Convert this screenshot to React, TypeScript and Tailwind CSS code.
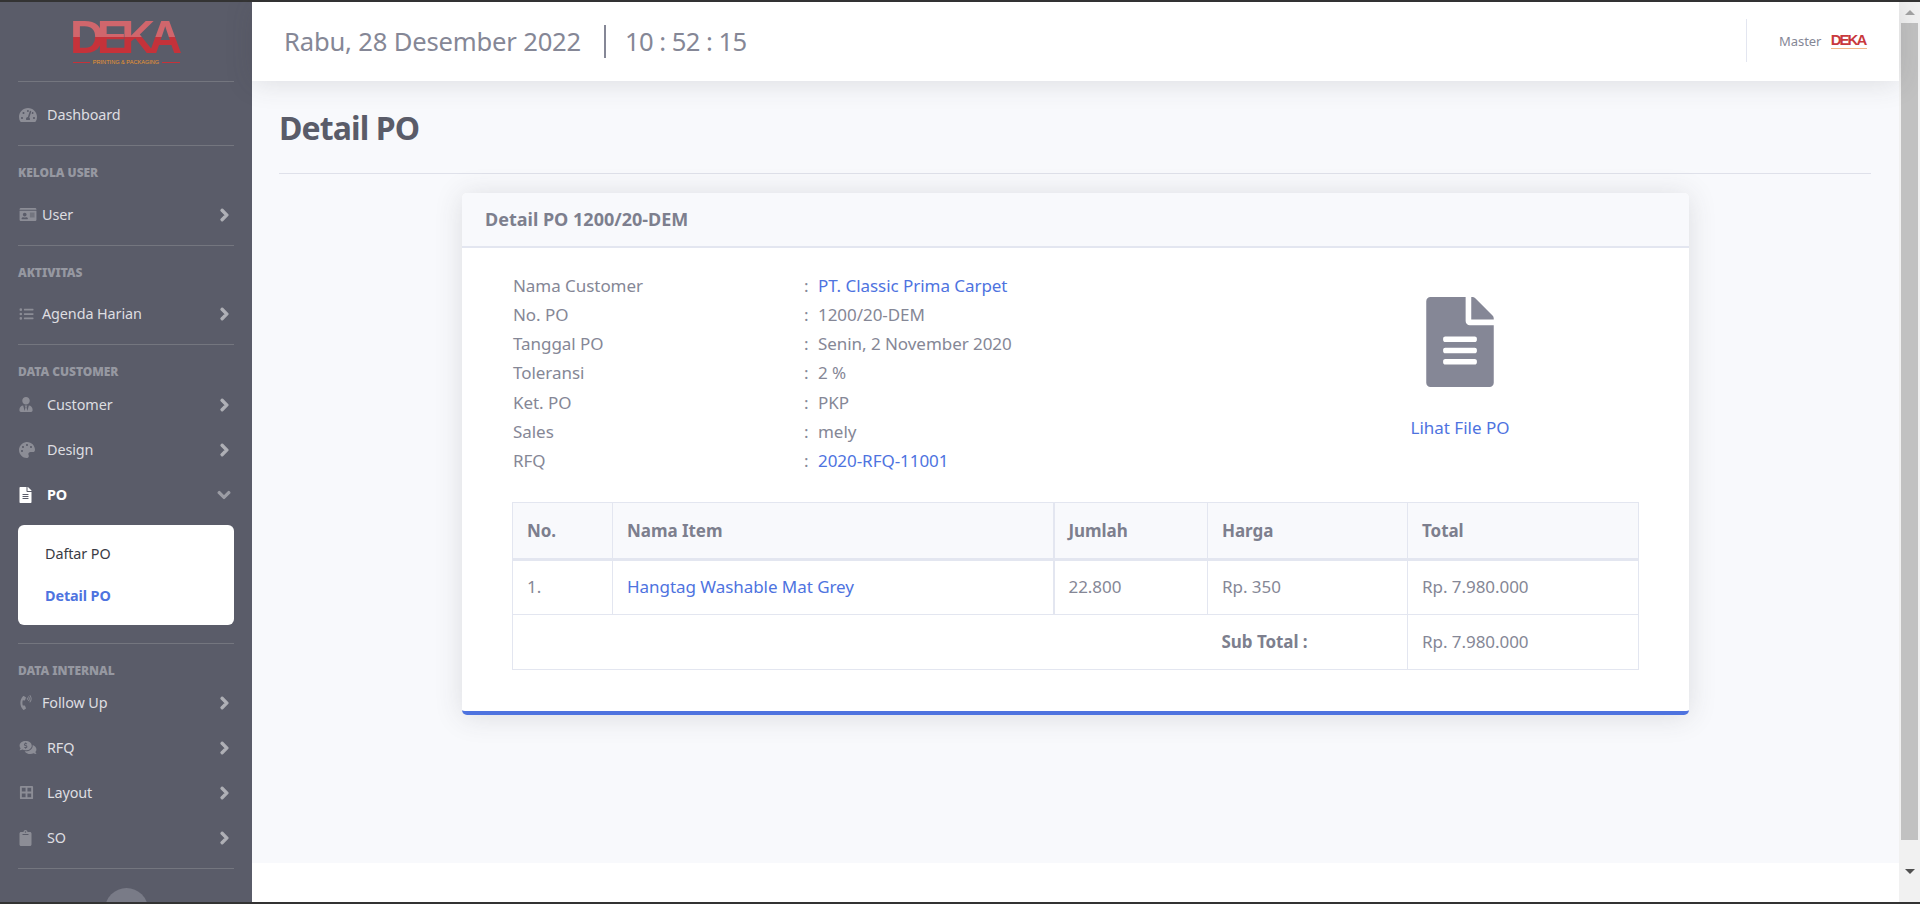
import React from "react";
import {
  FaTachometerAlt, FaIdCard, FaListUl, FaUserTie, FaPalette, FaFileAlt, FaPhoneVolume,
  FaCommentsDollar, FaBorderAll, FaClipboard, FaChevronRight, FaChevronDown,
} from "react-icons/fa";

const Rule = () => <div className="mx-[18px] h-px bg-[#74767f] shrink-0" />;

const Section = ({ label }: { label: string }) => (
  <div className="mx-[18px] mt-[18px] h-[17px] flex items-center text-[12px] font-black text-[#9698a1] tracking-[-0.05px] shrink-0">
    {label}
  </div>
);

type ItemProps = {
  icon: React.ReactNode;
  label: string;
  narrow?: boolean;
  active?: boolean;
  open?: boolean;
  chevron?: boolean;
  className?: string;
};

const Item = ({ icon, label, narrow, active, open, chevron = true, className = "" }: ItemProps) => (
  <div className={`h-[45px] shrink-0 pl-[19px] pr-[22px] flex items-center ${className}`}>
    <span className={`${narrow ? "w-[23px]" : "w-[28px]"} flex items-center ${active ? "text-white" : "text-[#8c8d96]"}`}>
      {icon}
    </span>
    <span className={`flex-1 text-[14.4px] tracking-[-0.1px] ${active ? "font-bold text-white" : "text-[#dedee1]"}`}>{label}</span>
    {chevron &&
      (open ? (
        <FaChevronDown className="w-[14px] h-[14px] text-[#9c9da5] -mr-[1px] stroke-current stroke-[40]" />
      ) : (
        <FaChevronRight className="w-[11px] h-[14px] text-[#b0b1b7] stroke-current stroke-[40]" />
      ))}
  </div>
);

const Logo = ({ small }: { small?: boolean }) =>
  small ? (
    <div className="w-[36px] flex flex-col items-center">
      <span className="h-[14px] leading-[14px] text-[15px] font-bold tracking-[-2px] pr-[2px] font-['Liberation_Sans',sans-serif] text-[#c9393d]">DEKA</span>
      <span className="w-full h-px bg-[#f2b98a] mt-[1px]" />
    </div>
  ) : (
    <div className="flex flex-col items-center w-[107px]">
      <span className="h-[36px] leading-[36px] text-[47px] font-bold tracking-[-7px] pr-[7px] font-['Liberation_Sans',sans-serif] text-transparent bg-clip-text bg-[linear-gradient(to_bottom,#d0666c_0%,#d0666c_50%,#c5323a_50%,#c5323a_100%)]">
        DEKA
      </span>
      <div className="flex items-center w-full mt-[3px] gap-[3px]">
        <span className="flex-1 h-px bg-[#c5323a]" />
        <span className="text-[5.6px] leading-[8px] text-[#e8952e] whitespace-nowrap font-['Liberation_Sans',sans-serif]">PRINTING &amp; PACKAGING</span>
        <span className="flex-1 h-px bg-[#c5323a]" />
      </div>
    </div>
  );

const Sidebar = () => (
  <aside className="w-[252px] shrink-0 bg-[#5a5c69] flex flex-col overflow-hidden">
    <div className="h-[79px] shrink-0 pt-[17px] flex justify-center">
      <Logo />
    </div>
    <Rule />
    <Item className="h-[63px] pt-[3px]" chevron={false} icon={<FaTachometerAlt className="w-[18px] h-[16px]" />} label="Dashboard" />
    <Rule />
    <Section label="KELOLA USER" />
    <Item narrow className="mt-[11px] mb-[8px]" icon={<FaIdCard className="w-[18px] h-[15px]" />} label="User" />
    <Rule />
    <Section label="AKTIVITAS" />
    <Item narrow className="mt-[10px] mb-[8px]" icon={<FaListUl className="w-[15px] h-[14px]" />} label="Agenda Harian" />
    <Rule />
    <Section label="DATA CUSTOMER" />
    <Item className="mt-[2px]" icon={<FaUserTie className="w-[14px] h-[15px]" />} label="Customer" />
    <Item icon={<FaPalette className="w-[16px] h-[16px]" />} label="Design" />
    <Item active open icon={<FaFileAlt className="w-[13px] h-[16px]" />} label="PO" />
    <div className="mx-[18px] mt-[8px] h-[100px] shrink-0 bg-white rounded-[6px] pl-[27px] pt-[11px] text-[14.4px] tracking-[-0.1px]">
      <div className="h-[36px] flex items-center text-[#3a3b45]">Daftar PO</div>
      <div className="h-[36px] mt-[6px] flex items-center font-bold text-[#4e73df]">Detail PO</div>
    </div>
    <div className="mt-[18px]">
      <Rule />
    </div>
    <Section label="DATA INTERNAL" />
    <Item narrow className="mt-[1px]" icon={<FaPhoneVolume className="w-[14px] h-[15px]" />} label="Follow Up" />
    <Item icon={<FaCommentsDollar className="w-[18px] h-[15px]" />} label="RFQ" />
    <Item icon={<FaBorderAll className="w-[15px] h-[15px]" />} label="Layout" />
    <Item icon={<FaClipboard className="w-[13px] h-[16px]" />} label="SO" />
    <div className="mt-[8px]">
      <Rule />
    </div>
    <div className="mt-[19px] w-[43px] h-[43px] shrink-0 rounded-full bg-[#797b87] self-center" />
  </aside>
);

const Header = () => (
  <header className="relative z-10 h-[79px] shrink-0 bg-white shadow-[0_2px_28px_0_rgba(58,59,69,0.15)] flex items-center pl-[32px] text-[#858796]">
    <span className="text-[25.6px] tracking-[-0.18px] w-[320px] pt-[1px]">Rabu, 28 Desember 2022</span>
    <span className="w-[2px] h-[33px] bg-[#858796]" />
    <span className="ml-[19px] text-[25.6px] tracking-[-0.55px] flex-1 pt-[1px]">10 : 52 : 15</span>
    <span className="w-px h-[43px] bg-[#e3e6f0] -mt-[2px]" />
    <span className="ml-[32px] text-[13px] tracking-[-0.05px] w-[52px]">Master</span>
    <div className="mr-[32px] -mt-[1px]">
      <Logo small />
    </div>
  </header>
);

const rows: [string, string, boolean][] = [
  ["Nama Customer", "PT. Classic Prima Carpet", true],
  ["No. PO", "1200/20-DEM", false],
  ["Tanggal PO", "Senin, 2 November 2020", false],
  ["Toleransi", "2 %", false],
  ["Ket. PO", "PKP", false],
  ["Sales", "mely", false],
  ["RFQ", "2020-RFQ-11001", true],
];

const Card = () => (
  <section className="w-[1227px] h-[522px] mx-auto bg-white rounded-[5px] border-b-[4px] border-[#4e73df] shadow-[0_2px_28px_0_rgba(58,59,69,0.15)] overflow-hidden">
    <div className="h-[55px] bg-[#f8f9fc] border-b-[2px] border-[#e3e6f0] pl-[23px] flex items-center text-[18px] font-bold text-[#7d7f8e]">
      Detail PO 1200/20-DEM
    </div>
    <div className="flex pt-[23px] pl-[51px] h-[254px]">
      <div className="flex-1">
        {rows.map(([k, v, link]) => (
          <div key={k} className="h-[29.2px] flex items-center text-[17px] tracking-[-0.05px]">
            <span className="w-[291px]">{k}</span>
            <span className="w-[14px]">:</span>
            <span className={link ? "text-[#4e73df]" : ""}>{v}</span>
          </div>
        ))}
      </div>
      <div className="w-[458px] flex flex-col items-center pt-[26px]">
        <FaFileAlt className="w-[68px] h-[90px] text-[#858796]" />
        <span className="mt-[28px] text-[17px] text-[#4e73df]">Lihat File PO</span>
      </div>
    </div>
    <table className="ml-[50px] w-[1126px] table-fixed border-collapse text-[17px] tracking-[-0.05px]">
      <colgroup>
        <col className="w-[100px]" />
        <col className="w-[441px]" />
        <col className="w-[154px]" />
        <col className="w-[200px]" />
        <col className="w-[231px]" />
      </colgroup>
      <thead>
        <tr className="h-[57px] bg-[#f8f9fc] border-b-[3px] border-[#e3e6f0] text-left font-bold text-[#7d7f8e]">
          <th className="border border-b-[3px] border-[#e3e6f0] pl-[14px]">No.</th>
          <th className="border border-b-[3px] border-r-[2px] border-[#e3e6f0] pl-[14px]">Nama Item</th>
          <th className="border border-b-[3px] border-[#e3e6f0] pl-[14px]">Jumlah</th>
          <th className="border border-b-[3px] border-[#e3e6f0] pl-[14px]">Harga</th>
          <th className="border border-b-[3px] border-[#e3e6f0] pl-[14px]">Total</th>
        </tr>
      </thead>
      <tbody>
        <tr className="h-[55px]">
          <td className="border border-[#e3e6f0] pl-[14px] pb-[2px]">1.</td>
          <td className="border border-r-[2px] border-[#e3e6f0] pl-[14px] pb-[2px] text-[#4e73df]">Hangtag Washable Mat Grey</td>
          <td className="border border-[#e3e6f0] pl-[14px] pb-[2px]">22.800</td>
          <td className="border border-[#e3e6f0] pl-[14px] pb-[2px]">Rp. 350</td>
          <td className="border border-[#e3e6f0] pl-[14px] pb-[2px]">Rp. 7.980.000</td>
        </tr>
        <tr className="h-[55px]">
          <td colSpan={3} className="border border-r-0 border-[#e3e6f0]"></td>
          <td className="border border-l-0 border-[#e3e6f0] pl-[14px] font-bold text-[#7d7f8e]">Sub Total :</td>
          <td className="border border-[#e3e6f0] pl-[14px]">Rp. 7.980.000</td>
        </tr>
      </tbody>
    </table>
  </section>
);

const Scrollbar = () => (
  <div className="w-[21px] shrink-0 bg-[#f1f1f1] flex flex-col items-center">
    <div className="h-[21px] flex items-center justify-center">
      <span className="w-0 h-0 border-x-[5px] border-x-transparent border-b-[5px] border-b-[#a3a3a3]" />
    </div>
    <div className="w-[17px] h-[817px] bg-[#c1c1c1]" />
    <div className="flex-1 flex items-center justify-center">
      <span className="w-0 h-0 border-x-[5px] border-x-transparent border-t-[5px] border-t-[#505050]" />
    </div>
  </div>
);

export default function App() {
  return (
    <div className="h-[904px] flex flex-col overflow-hidden bg-white text-[#858796] font-['Noto_Sans','Open_Sans',sans-serif]">
      <div className="h-[2px] shrink-0 bg-[#333333]" />
      <div className="h-[900px] flex">
        <Sidebar />
        <main className="flex-1 flex flex-col min-w-0">
          <Header />
          <div className="h-[782px] shrink-0 bg-[#f8f9fc] px-[28px]">
            <h1 className="h-[93px] pt-[1px] -ml-px flex items-center border-b border-[#dfe1ea] text-[32px] font-bold text-[#5a5c69] tracking-[-0.9px]">
              Detail PO
            </h1>
            <div className="mt-[19px]">
              <Card />
            </div>
          </div>
          <div className="flex-1 bg-white" />
        </main>
        <Scrollbar />
      </div>
      <div className="h-[2px] shrink-0 bg-[#333333]" />
    </div>
  );
}
